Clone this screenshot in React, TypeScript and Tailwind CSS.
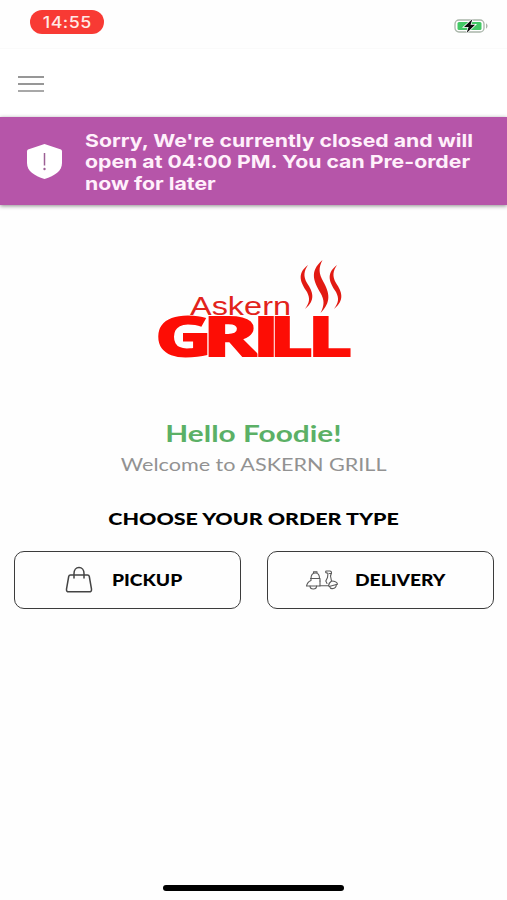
const GRILL_LETTERS = [
  { char: "G", x: 154.2, width: 58.5 },
  { char: "R", x: 202, width: 58 },
  { char: "I", x: 252, width: 28 },
  { char: "L", x: 268.7, width: 45.4 },
  { char: "L", x: 307, width: 46.5 },
];

const BANNER_LINES = [
  "Sorry, We're currently closed and will",
  "open at 04:00 PM. You can Pre-order",
  "now for later",
];

export default function App() {
  return (
    <div className="flex h-[900px] w-[507px] flex-col overflow-hidden bg-[#fefefe] font-['Lato',sans-serif]">
      <StatusBar />
      <Header />
      <ClosedBanner />

      <main className="flex flex-1 flex-col items-center">
        <Logo />

        <h1 className="mt-[54px] origin-center scale-x-[1.27] whitespace-nowrap text-[23.5px] leading-[28px] font-bold text-[#5bb066]">
          Hello Foodie!
        </h1>
        <p className="mt-[5px] origin-center scale-x-[1.2] whitespace-nowrap text-[18px] leading-[24px] text-[#929292]">
          Welcome to ASKERN GRILL
        </p>

        <h2 className="mt-[31px] origin-center scale-x-[1.225] whitespace-nowrap text-[17.5px] leading-[24px] font-black text-black">
          CHOOSE YOUR ORDER TYPE
        </h2>

        <div className="mt-5 grid w-full grid-cols-2 gap-[26px] px-[13.5px]">
          <button className="flex h-[58px] items-center rounded-[10px] border-[1.5px] border-[#3c3c3c] pl-[50px]">
            <BagIcon />
            <span className="ml-[19px] origin-left scale-x-[1.2] text-[16px] font-black">PICKUP</span>
          </button>
          <button className="flex h-[58px] items-center rounded-[10px] border-[1.5px] border-[#3c3c3c] pl-[37px]">
            <ScooterIcon />
            <span className="ml-[16px] origin-left scale-x-[1.2] text-[16px] font-black">DELIVERY</span>
          </button>
        </div>
      </main>

      {/* Home indicator */}
      <div className="mx-auto mb-[9px] h-[6px] w-[181px] rounded-full bg-black" />
    </div>
  );
}

function StatusBar() {
  return (
    <div className="flex h-[49px] shrink-0 items-start justify-between border-b border-[#fafafa] pr-[18px] pl-[30px]">
      <div className="mt-[10px] flex h-[24px] w-[74px] items-center justify-center rounded-full bg-[#f83a34]">
        <span className="mt-[2px] scale-x-[1.15] font-['Inter',sans-serif] text-[15.5px] font-medium tracking-[0.4px] text-[#ffe9e6]">
          14:55
        </span>
      </div>
      <svg className="mt-[18px]" width="35" height="16" viewBox="0 0 35 16">
        <rect x="1" y="2" width="29" height="12" rx="4" fill="#fff" stroke="#a9b5a9" strokeWidth="1.3" />
        <rect x="3.5" y="4" width="24" height="8" rx="1.5" fill="#43c865" />
        <path d="M32 5.5c2 .6 2 4.4 0 5z" fill="#a9b5a9" />
        <path d="M18.500 1 10 9h4.600l-2 6 8.500-8.200h-4.600z" fill="#0b0b0b" stroke="#fff" strokeWidth="1.600" paintOrder="stroke" />
      </svg>
    </div>
  );
}

function Header() {
  return (
    <header className="flex h-[68px] shrink-0 flex-col gap-[5px] bg-white pt-[27px] pl-[17.5px]">
      <span className="h-[2px] w-[26px] bg-[#979797]" />
      <span className="h-[2px] w-[26px] bg-[#979797]" />
      <span className="h-[2px] w-[26px] bg-[#a8a8a8]" />
    </header>
  );
}

function ClosedBanner() {
  return (
    <div className="flex h-[88px] shrink-0 items-center bg-[#b655a9] shadow-[0_1px_4px_rgba(0,0,0,0.45)]">
      <svg className="ml-[26px]" width="37" height="37" viewBox="0 0 37 37">
        <path d="M18.500 1 35 6.500Q36 7 36 8.500V20c0 8-7 12.500-17.500 16C8 32.500 1 28 1 20V8.500Q1 7 2 6.500Z" fill="#fff" />
        <path d="M18.500 10v12.500" stroke="#9c6095" strokeWidth="1.500" />
        <circle cx="18.500" cy="26" r="1.200" fill="#9c6095" />
      </svg>
      <p className="mt-[2px] ml-[22px] origin-left scale-x-[1.18] font-['Inter',sans-serif] text-[18px] leading-[21.2px] font-bold whitespace-nowrap text-[#fff0fb]">
        {BANNER_LINES.map((line) => (
          <span key={line} className="block">
            {line}
          </span>
        ))}
      </p>
    </div>
  );
}

function Logo() {
  return (
    <svg className="mt-[50px] shrink-0 overflow-visible" width="207" height="110" viewBox="150 255 207 110">
      {/* Steam */}
      <g fill="#e21a12">
        <path d="M308 265c-12 9-7 18-1 27 3 6 3 10-2 17 11-9 8-17 2-26-4-7-3-12 1-18z" />
        <path d="M322.500 260c-14 12-8 22-2 33 4 7 4 12 0 20 11-11 9-20 3-31-5-9-5-14-1-22z" />
        <path d="M337 265c-12 9-7 18-1 27 3 6 3 10-2 17 11-9 8-17 2-26-4-7-3-12 1-18z" />
      </g>
      {GRILL_LETTERS.map(({ char, x, width }) => (
        <text
          key={x}
          x={x}
          y="357"
          fontFamily="Open Sans, sans-serif"
          fontWeight="800"
          fontSize="56"
          fill="#fd0d05"
          stroke="#fff"
          strokeWidth="1"
          paintOrder="stroke"
          textLength={width}
          lengthAdjust="spacingAndGlyphs"
        >
          {char}
        </text>
      ))}
      <text
        x="190"
        y="314.500"
        fontFamily="Liberation Sans, sans-serif"
        fontSize="25.500"
        fill="#e2231b"
        textLength="101"
        lengthAdjust="spacingAndGlyphs"
      >
        Askern
      </text>
    </svg>
  );
}

function BagIcon() {
  return (
    <svg width="28" height="28" viewBox="0 0 28 28" fill="none" stroke="#444" strokeWidth="1.500" strokeLinecap="round" strokeLinejoin="round">
      <path d="M5.500 9h17q1.500 0 1.800 1.500l2.200 12.700q.3 2.600-2.300 2.600H3.800q-2.600 0-2.300-2.600L3.700 10.500Q4 9 5.500 9z" />
      <path d="M9 12V7.500C9 4 11 1.500 14 1.500s5 2.500 5 6V12" />
    </svg>
  );
}

function ScooterIcon() {
  return (
    <svg width="34" height="20" viewBox="0 0 34 20" fill="none" stroke="#5a5a5a" strokeWidth="1.100" strokeLinecap="round" strokeLinejoin="round">
      {/* Delivery box */}
      <path d="M6 8.500C6 4.500 7.500 3 10.500 3s4 1.500 4 5.500M8.500 3.200V1.800h3.500v1.400M5.500 8.500h9.500v2.500" />
      {/* Rear body */}
      <path d="M6 8.500v2C3.500 11.500 2 13.500 1.500 16H15v-5" />
      {/* Floor, leg shield and handlebar */}
      <path d="M15 15.800h8.500c.3-2 1.500-3.800 3-4.800L25.500 6l.8-2.500h-1.800" />
      <path d="M26.300 3.500c.5-1.500 0-2.500-1.500-2.500h-3.300c-1.200 0-1.200 1.800 0 1.900l1.500.3-.5 4.300-1.700 3.500 1.200 2.500" />
      {/* Front fender */}
      <path d="M26.500 11c3 0 5.500 1 6 3.200l-8.500 2.300" />
      {/* Wheels */}
      <path d="M5 16a3.300 3 0 0 0 6.600 0M24.500 16.300c1 3.600 6.800 3 6.800-1.800" />
    </svg>
  );
}
